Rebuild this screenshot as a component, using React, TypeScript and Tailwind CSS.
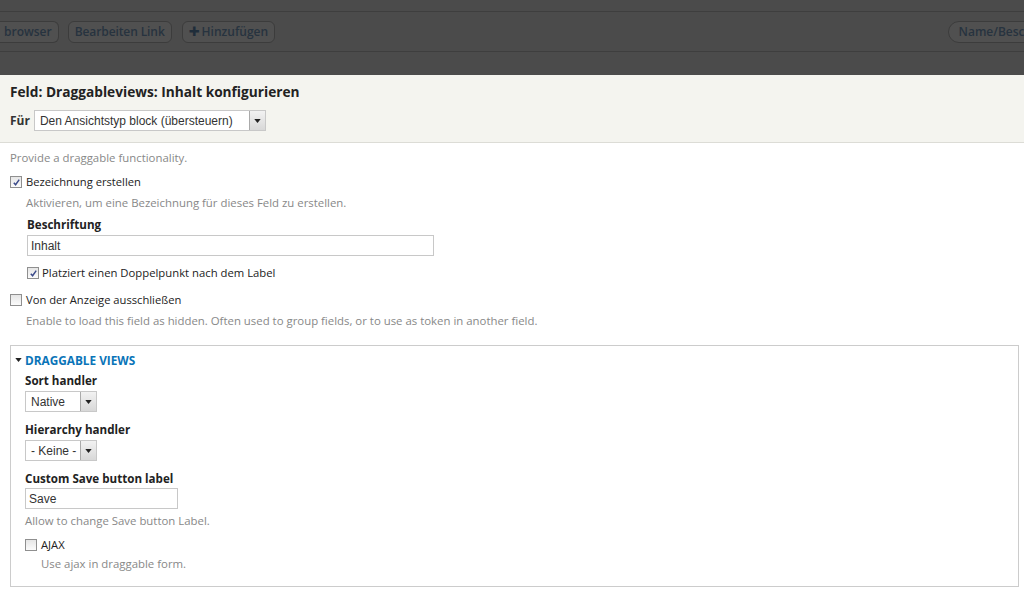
import React from "react";

const ui = { fontFamily: '"Open Sans", "DejaVu Sans", sans-serif' };
const arial = { fontFamily: '"Liberation Sans", Arial, sans-serif' };

function Checkbox({ checked }: { checked?: boolean }) {
  return (
    <span className="inline-flex h-[12px] w-[12px] shrink-0 items-center justify-center border border-[#8f8f8f] bg-gradient-to-b from-[#e6e6e6] to-[#fbfbfb]">
      {checked && (
        <svg viewBox="0 0 10 10" className="h-[9px] w-[9px]">
          <path d="M2 5.2 L4 7.5 L8 1.8" fill="none" stroke="#3b4a8a" strokeWidth="1.6" />
        </svg>
      )}
    </span>
  );
}

function Select({ value, width }: { value: string; width: string }) {
  return (
    <div className={`flex h-[21px] border border-[#c8c8c8] bg-white ${width}`} style={arial}>
      <div className="flex flex-1 items-center pl-[5px] text-[12px] text-[#333]">{value}</div>
      <div className="flex w-[16px] items-center justify-center border-l border-[#aaa] bg-gradient-to-b from-[#f2f2f2] to-[#d8d8d8]">
        <svg viewBox="0 0 8 5" className="h-[4px] w-[7px]">
          <path d="M0 0 H8 L4 5 Z" fill="#222" />
        </svg>
      </div>
    </div>
  );
}

function TopButton({ children, className = "" }: { children: React.ReactNode; className?: string }) {
  return (
    <span
      className={`flex h-[22px] shrink-0 items-center rounded-[6px] border border-[#3c3c3c] bg-[#505050] px-[6px] text-[12px] font-semibold text-[#27333f] ${className}`}
    >
      {children}
    </span>
  );
}

export default function App() {
  return (
    <div className="h-[594px] w-[1024px] overflow-hidden bg-white text-[#333]" style={ui}>
      {/* dimmed views ui behind the modal */}
      <div className="h-[75px] bg-[#4b4b4b]">
        <div className="h-[12px] border-b border-[#3e3e3e]" />
        <div className="flex h-[40px] items-center overflow-hidden border-b border-[#3e3e3e]">
          <TopButton className="-ml-[4px] rounded-l-none border-l-0 pl-[8px]">browser</TopButton>
          <TopButton className="ml-[9px] tracking-[-0.1px]">Bearbeiten Link</TopButton>
          <TopButton className="ml-[10px]">
            <span className="mr-[2px] text-[13px] font-bold text-[#1f2d3a]">✚</span>Hinzufügen
          </TopButton>
          <div className="flex-1" />
          <TopButton className="-mr-[60px] rounded-l-[11px] pl-[10px]">Name/Beschreibung</TopButton>
        </div>
      </div>

      {/* modal header */}
      <div className="border-b border-[#dcdcd6] bg-[#f4f4ef] px-[10px] pb-[11px] pt-[8px]">
        <h1 className="text-[13.7px] font-bold leading-[18px] text-[#222]">Feld: Draggableviews: Inhalt konfigurieren</h1>
        <div className="mt-[9px] flex items-center gap-[4px]">
          <span className="text-[12px] font-bold text-[#333]">Für</span>
          <Select value="Den Ansichtstyp block (übersteuern)" width="w-[232px]" />
        </div>
      </div>

      {/* modal body */}
      <div className="px-[10px] pt-[7px] text-[11.4px]">
        <p className="leading-[16px] text-[#888]">Provide a draggable functionality.</p>

        <label className="mt-[8px] flex items-center gap-[4px] text-[11.2px] leading-[16px] text-[#222]">
          <Checkbox checked />
          Bezeichnung erstellen
        </label>
        <p className="ml-[16px] mt-[5px] leading-[16px] text-[#888]">Aktivieren, um eine Bezeichnung für dieses Feld zu erstellen.</p>

        <div className="ml-[17px] mt-[6px]">
          <div className="text-[11.6px] font-bold leading-[16px] text-[#222]">Beschriftung</div>
          <div
            className="mt-[2px] flex h-[21px] w-[407px] items-center border border-[#c8c8c8] pl-[3px] text-[12px] text-[#333]"
            style={arial}
          >
            Inhalt
          </div>
          <label className="mt-[9px] flex items-center gap-[3px] text-[11.3px] leading-[16px] text-[#222]">
            <Checkbox checked />
            Platziert einen Doppelpunkt nach dem Label
          </label>
        </div>

        <label className="mt-[11px] flex items-center gap-[4px] text-[11.2px] leading-[16px] text-[#222]">
          <Checkbox />
          Von der Anzeige ausschließen
        </label>
        <p className="ml-[16px] mt-[5px] leading-[16px] text-[#888]">
          Enable to load this field as hidden. Often used to group fields, or to use as token in another field.
        </p>

        {/* fieldset */}
        <div className="mt-[16px] h-[242px] w-[1009px] border border-[#ccc] px-[4px] pt-[6px]">
          <div className="flex items-center gap-[3px] text-[11.8px] font-bold leading-[16px] text-[#0a74b8]">
            <svg viewBox="0 0 8 5" className="h-[4px] w-[7px]">
              <path d="M0 0 H8 L4 5 Z" fill="#222" />
            </svg>
            DRAGGABLE VIEWS
          </div>

          <div className="ml-[10px]">
            <div className="mt-[5px] text-[11.6px] font-bold leading-[16px] text-[#222]">Sort handler</div>
            <div className="mt-[2px]">
              <Select value="Native" width="w-[72px]" />
            </div>

            <div className="mt-[10px] text-[11.6px] font-bold leading-[16px] text-[#222]">Hierarchy handler</div>
            <div className="mt-[2px]">
              <Select value="- Keine -" width="w-[72px]" />
            </div>

            <div className="mt-[10px] text-[11.6px] font-bold leading-[16px] text-[#222]">Custom Save button label</div>
            <div
              className="mt-[1px] flex h-[21px] w-[153px] items-center border border-[#c8c8c8] pl-[3px] text-[12px] text-[#333]"
              style={arial}
            >
              Save
            </div>
            <p className="mt-[4px] leading-[16px] text-[#888]">Allow to change Save button Label.</p>

            <label className="mt-[8px] flex items-center gap-[4px] text-[11.2px] leading-[16px] text-[#222]">
              <Checkbox />
              AJAX
            </label>
            <p className="ml-[16px] mt-[3px] leading-[16px] text-[#888]">Use ajax in draggable form.</p>
          </div>
        </div>
      </div>
    </div>
  );
}
